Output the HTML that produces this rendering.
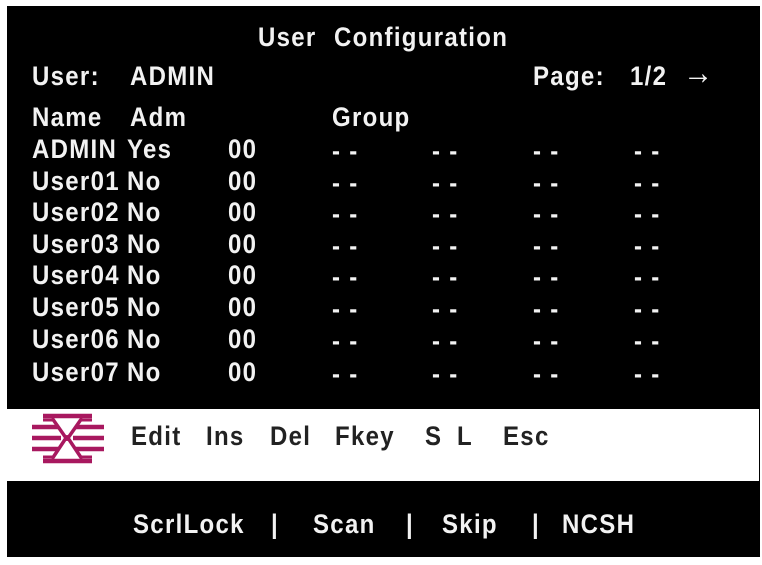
<!DOCTYPE html>
<html><head><meta charset="utf-8"><style>
body{margin:0;width:762px;height:565px;background:#fff;position:relative;overflow:hidden;font-family:"Liberation Sans",Arial,sans-serif;font-weight:bold;}
#box{position:absolute;left:7px;top:6px;width:753px;height:551px;background:#000;}
#band{position:absolute;left:7px;top:409px;width:752px;height:72px;background:#fff;}
.t{position:absolute;font-size:24px;line-height:24px;color:#f2f2f2;white-space:pre;letter-spacing:1.3px;transform:scaleY(1.12);transform-origin:0 50%;}
.d{color:#222;}
</style></head><body>
<div id="box"></div>
<div id="band"></div>
<div class="t" style="left:258px;top:26px">User</div>
<div class="t" style="left:334px;top:26px">Configuration</div>
<div class="t" style="left:32px;top:65px">User:</div>
<div class="t" style="left:130px;top:65px">ADMIN</div>
<div class="t" style="left:533px;top:65px">Page:</div>
<div class="t" style="left:630px;top:65px">1/2</div>
<div class="t" style="left:683px;top:62px;font-size:30px">→</div>
<div class="t" style="left:32px;top:106px">Name</div>
<div class="t" style="left:130px;top:106px">Adm</div>
<div class="t" style="left:332px;top:106px">Group</div>

<div class="t" style="left:32px;top:138px">ADMIN</div><div class="t" style="left:127px;top:138px">Yes</div>
<div class="t" style="left:32px;top:170px">User01</div><div class="t" style="left:127px;top:170px">No</div>
<div class="t" style="left:32px;top:201px">User02</div><div class="t" style="left:127px;top:201px">No</div>
<div class="t" style="left:32px;top:233px">User03</div><div class="t" style="left:127px;top:233px">No</div>
<div class="t" style="left:32px;top:264px">User04</div><div class="t" style="left:127px;top:264px">No</div>
<div class="t" style="left:32px;top:296px">User05</div><div class="t" style="left:127px;top:296px">No</div>
<div class="t" style="left:32px;top:328px">User06</div><div class="t" style="left:127px;top:328px">No</div>
<div class="t" style="left:32px;top:361px">User07</div><div class="t" style="left:127px;top:361px">No</div>

<div id="rows"></div>
<script>
var ys=[138,170,201,233,264,296,328,361],h='';
ys.forEach(function(y){h+='<div class="t" style="left:228px;top:'+y+'px">00</div>';
[332,432,533,634].forEach(function(x){h+='<div class="t" style="left:'+x+'px;top:'+(y+2)+'px">- -</div>';});});
document.getElementById('rows').innerHTML=h;
</script>

<svg style="position:absolute;left:30px;top:411px" width="76" height="56" viewBox="0 0 76 56">
<g stroke="#a8185f" fill="none" stroke-width="4.5">
<path d="M13 5H62M13 50H62"/>
<path d="M2 16H28M46 16H74M2 27H31M43 27H74M2 38H28M46 38H74"/>
<path d="M13 9H24M51 9H62M13 46H24M51 46H62" stroke-width="3"/>
<path d="M22 7L36 27L22 48M52 7L38 27L52 48" stroke-width="3.5"/>
</g>
<circle cx="37" cy="27" r="3" fill="#a8185f"/>
</svg>

<div class="t d" style="left:131px;top:425px">Edit</div>
<div class="t d" style="left:206px;top:425px">Ins</div>
<div class="t d" style="left:270px;top:425px">Del</div>
<div class="t d" style="left:335px;top:425px">Fkey</div>
<div class="t d" style="left:425px;top:425px">S</div>
<div class="t d" style="left:457px;top:425px">L</div>
<div class="t d" style="left:503px;top:425px">Esc</div>

<div class="t" style="left:133px;top:513px">ScrlLock</div>
<div class="t" style="left:271px;top:513px">|</div>
<div class="t" style="left:313px;top:513px">Scan</div>
<div class="t" style="left:406px;top:513px">|</div>
<div class="t" style="left:442px;top:513px">Skip</div>
<div class="t" style="left:532px;top:513px">|</div>
<div class="t" style="left:562px;top:513px">NCSH</div>
</body></html>
